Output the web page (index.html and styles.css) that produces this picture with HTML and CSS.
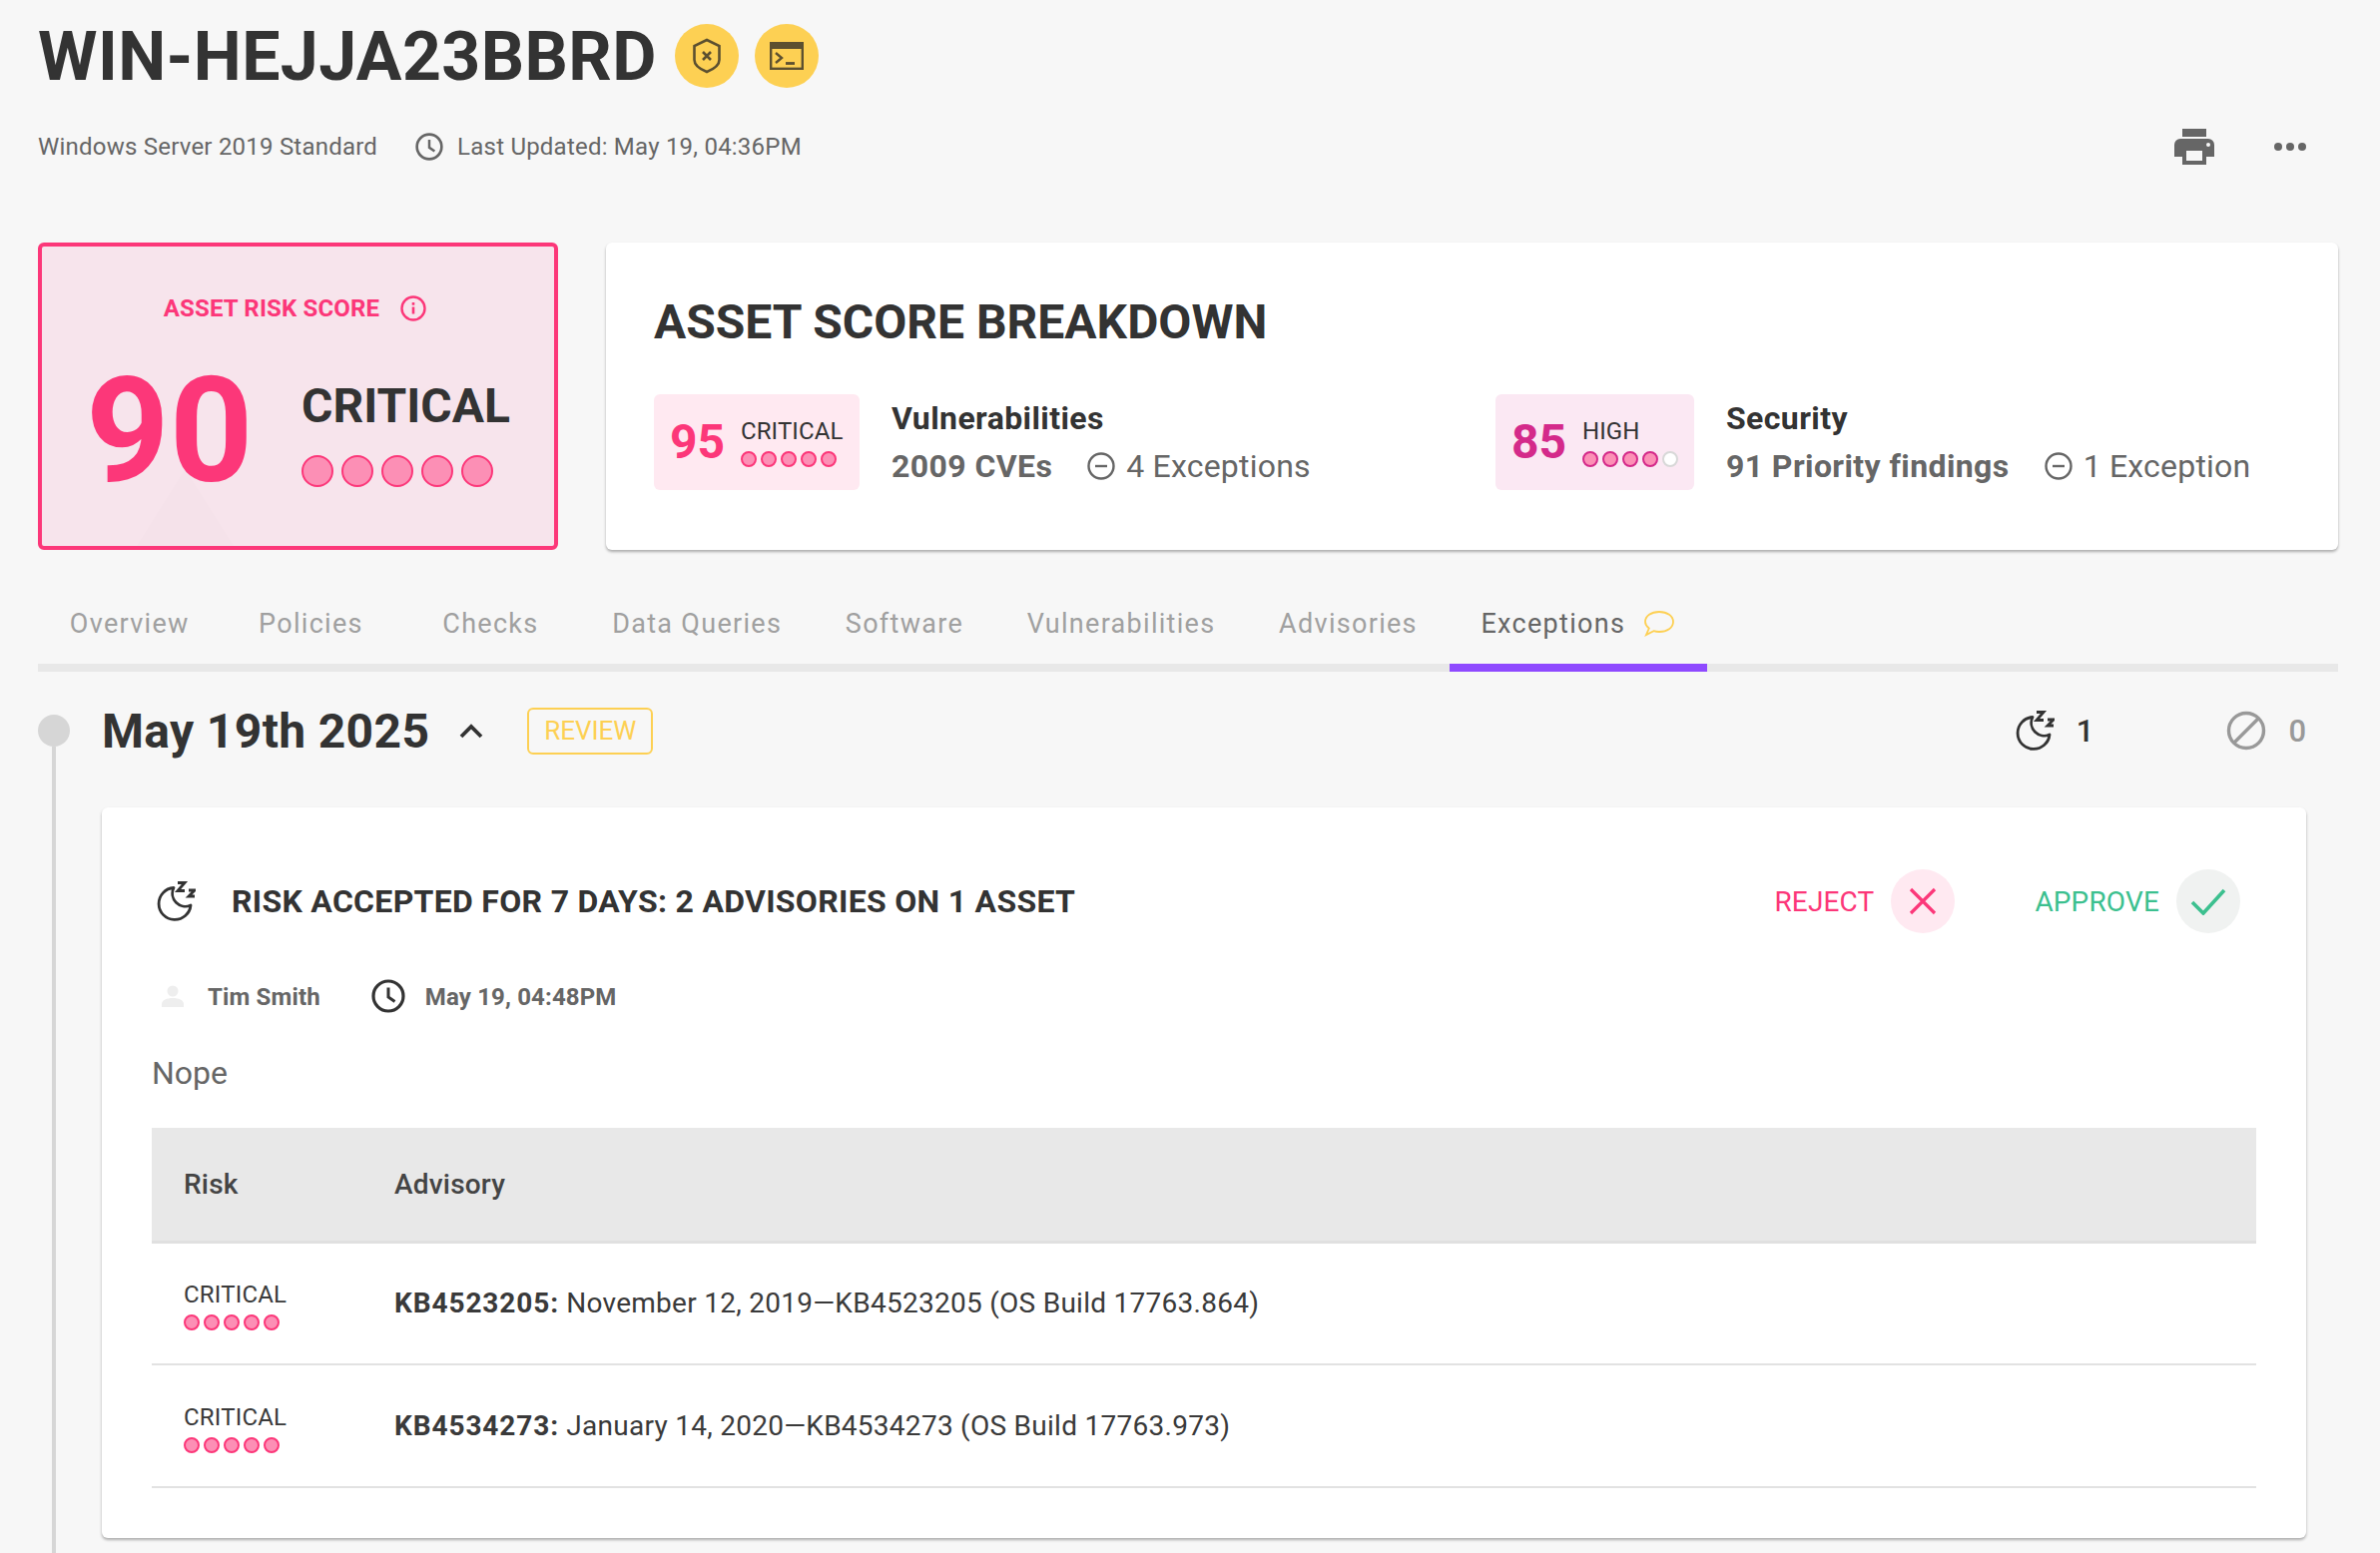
FILE: index.html
```html
<!DOCTYPE html>
<html lang="en">
<head>
<meta charset="utf-8">
<title>WIN-HEJJA23BBRD</title>
<link rel="stylesheet" href="styles.css">
</head>
<body>
<div class="page">
  <svg class="defs" width="0" height="0" aria-hidden="true">
    <defs>
      <symbol id="moon" viewBox="0 0 40 40">
        <path d="M18 6.500A16 16 0 1 0 35 24 A13 13 0 0 1 18 6.500Z" fill="none" stroke="currentColor" stroke-width="2.800" stroke-linejoin="round"/>
        <path d="M22 1.500h7l-7 8h7M33 9h6l-6 6h6" fill="none" stroke="currentColor" stroke-width="2.800"/>
      </symbol>
      <symbol id="clock" viewBox="0 0 34 34">
        <circle cx="17" cy="17" r="15" fill="none" stroke="currentColor" stroke-width="3.200"/>
        <path d="M17 8.500V18l6.500 4.500" fill="none" stroke="currentColor" stroke-width="3"/>
      </symbol>
      <symbol id="minus" viewBox="0 0 28 28">
        <circle cx="14" cy="14" r="12.500" fill="none" stroke="currentColor" stroke-width="2.400"/>
        <path d="M8 14h12" stroke="currentColor" stroke-width="2.400"/>
      </symbol>
    </defs>
  </svg>

  <header class="head">
    <div class="title-row">
      <h1 class="title">WIN-HEJJA23BBRD</h1>
      <span class="badge">
        <svg width="30" height="36" viewBox="0 0 30 36"><path d="M15 2l12.500 6v14c0 5-5 9-12.500 12C7.500 31 2.500 27 2.500 22V8z" fill="none" stroke="#5c5030" stroke-width="2.600"/><path d="M11 14l8 8M19 14l-8 8" stroke="#5c5030" stroke-width="2.600"/></svg>
      </span>
      <span class="badge">
        <svg width="34" height="28" viewBox="0 0 34 28"><rect x="1.200" y="1.200" width="31.600" height="25.600" fill="none" stroke="#5c5030" stroke-width="2.400"/><rect x="1" y="1" width="32" height="6" fill="#5c5030"/><path d="M6 11l6 5-6 5" fill="none" stroke="#5c5030" stroke-width="2.400"/><path d="M16 21.500h9" stroke="#5c5030" stroke-width="2.800"/></svg>
      </span>
    </div>
    <div class="sub-row">
      <span class="os">Windows Server 2019 Standard</span>
      <svg class="sub-clock" width="28" height="28"><use href="#clock"/></svg>
      <span class="updated">Last Updated: May 19, 04:36PM</span>
      <span class="tools">
        <svg width="40" height="36" viewBox="0 0 40 36"><path d="M8 0h24v8H8zM6 10h28a6 6 0 0 1 6 6v12h-8v8H8v-8H0V16a6 6 0 0 1 6-6z" fill="#666"/><rect x="12" y="22" width="16" height="10" fill="#f7f7f7"/><circle cx="34" cy="16" r="2" fill="#f7f7f7"/></svg>
        <svg class="more" width="32" height="8" viewBox="0 0 32 8"><circle cx="4" cy="4" r="4" fill="#666"/><circle cx="16" cy="4" r="4" fill="#666"/><circle cx="28" cy="4" r="4" fill="#666"/></svg>
      </span>
    </div>
  </header>

  <section class="scores">
    <div class="risk">
      <span class="beam"></span>
      <div class="risk-label">
        <span>ASSET RISK SCORE</span>
        <svg width="26" height="26" viewBox="0 0 26 26"><circle cx="13" cy="13" r="11.500" fill="none" stroke="#fc3779" stroke-width="2.400"/><path d="M13 11.500v7M13 7v2.800" stroke="#fc3779" stroke-width="2.600"/></svg>
      </div>
      <div class="risk-main">
        <span class="risk-num">90</span>
        <div class="risk-side">
          <span class="risk-word">CRITICAL</span>
          <span class="dots dots-lg"><i></i><i></i><i></i><i></i><i></i></span>
        </div>
      </div>
    </div>
    <div class="breakdown">
      <h2 class="bd-title">ASSET SCORE BREAKDOWN</h2>
      <div class="bd-row">
        <div class="bd-item bd-vuln">
          <div class="chip chip-crit">
            <span class="chip-num">95</span>
            <div class="chip-side"><span class="chip-word">CRITICAL</span><span class="dots"><i></i><i></i><i></i><i></i><i></i></span></div>
          </div>
          <div class="bd-text">
            <div class="bd-name">Vulnerabilities</div>
            <div class="bd-detail"><b>2009 CVEs</b><svg width="28" height="28"><use href="#minus"/></svg><span>4 Exceptions</span></div>
          </div>
        </div>
        <div class="bd-item bd-sec">
          <div class="chip chip-high">
            <span class="chip-num">85</span>
            <div class="chip-side"><span class="chip-word">HIGH</span><span class="dots dots-high"><i></i><i></i><i></i><i></i><i class="off"></i></span></div>
          </div>
          <div class="bd-text">
            <div class="bd-name">Security</div>
            <div class="bd-detail"><b>91 Priority findings</b><svg width="28" height="28"><use href="#minus"/></svg><span>1 Exception</span></div>
          </div>
        </div>
      </div>
    </div>
  </section>

  <nav class="tabs">
    <a class="tab">Overview</a>
    <a class="tab">Policies</a>
    <a class="tab">Checks</a>
    <a class="tab">Data Queries</a>
    <a class="tab">Software</a>
    <a class="tab">Vulnerabilities</a>
    <a class="tab">Advisories</a>
    <a class="tab active">Exceptions
      <svg width="32" height="28" viewBox="0 0 32 28"><path d="M16 2c8 0 14 4 14 10s-6 10-14 10c-2 0-4-.3-5.500-.8L3 25l2.800-6.500C3.500 16.700 2 14.500 2 12 2 6 8 2 16 2z" fill="none" stroke="#fdd053" stroke-width="1.800"/></svg>
    </a>
  </nav>

  <section class="group">
    <div class="rail"><span class="rail-dot"></span><span class="rail-line"></span></div>
    <div class="group-body">
      <div class="group-head">
        <h3 class="date">May 19th 2025</h3>
        <svg class="chev" width="24" height="16" viewBox="0 0 24 16"><path d="M2 14l10-10 10 10" fill="none" stroke="#333" stroke-width="3.800"/></svg>
        <span class="review">REVIEW</span>
        <span class="stat stat-moon"><svg width="40" height="40"><use href="#moon"/></svg>1</span>
        <span class="stat stat-ban">
          <svg width="40" height="40" viewBox="0 0 40 40"><circle cx="20" cy="20" r="17.500" fill="none" stroke="#999" stroke-width="3.400"/><path d="M8 32L32 8" stroke="#999" stroke-width="3.400"/></svg>0</span>
      </div>

      <article class="card">
        <div class="card-top">
          <svg class="card-moon" width="40" height="40"><use href="#moon"/></svg>
          <h4 class="card-title">RISK ACCEPTED FOR 7 DAYS: 2 ADVISORIES ON 1 ASSET</h4>
          <div class="actions">
            <span class="act act-reject">REJECT<span class="act-btn">
              <svg width="30" height="30" viewBox="0 0 30 30"><path d="M3 3l24 24M27 3L3 27" stroke="#fc3779" stroke-width="3.200"/></svg></span></span>
            <span class="act act-approve">APPROVE<span class="act-btn">
              <svg width="36" height="28" viewBox="0 0 36 28"><path d="M2 15l11 11L34 3" fill="none" stroke="#3cc08f" stroke-width="3.600"/></svg></span></span>
          </div>
        </div>
        <div class="meta">
          <svg class="avatar" width="22" height="22" viewBox="0 0 22 22"><circle cx="11" cy="6" r="5.500" fill="#eee"/><path d="M0 22v-3c0-4 5-6 11-6s11 2 11 6v3z" fill="#eee"/></svg>
          <span class="meta-name">Tim Smith</span>
          <svg class="meta-clock" width="34" height="34"><use href="#clock"/></svg>
          <span class="meta-date">May 19, 04:48PM</span>
        </div>
        <p class="note">Nope</p>
        <table class="table">
          <thead><tr><th class="col-risk">Risk</th><th>Advisory</th></tr></thead>
          <tbody>
            <tr>
              <td><div class="cell-risk"><span class="cell-word">CRITICAL</span><span class="dots"><i></i><i></i><i></i><i></i><i></i></span></div></td>
              <td><b>KB4523205:</b> November 12, 2019—KB4523205 (OS Build 17763.864)</td>
            </tr>
            <tr>
              <td><div class="cell-risk"><span class="cell-word">CRITICAL</span><span class="dots"><i></i><i></i><i></i><i></i><i></i></span></div></td>
              <td><b>KB4534273:</b> January 14, 2020—KB4534273 (OS Build 17763.973)</td>
            </tr>
          </tbody>
        </table>
      </article>
    </div>
  </section>
</div>
</body>
</html>
```
FILE: styles.css
```css
* { box-sizing: border-box; }
html, body { margin: 0; padding: 0; }
body { background: #f7f7f7; font-family: Roboto, "Liberation Sans", sans-serif; color: #333; }
.page { width: 2384px; height: 1556px; overflow: hidden; padding: 0 42px 0 38px; }
.defs { position: absolute; }

.head { padding-top: 24px; }
.title-row { display: flex; align-items: center; height: 64px; }
.title { margin: 2px 18px 0 0; font-size: 68px; line-height: 64px; font-weight: 700; letter-spacing: .4px; color: #333; }
.badge { width: 64px; height: 64px; border-radius: 50%; background: #fdd053; display: flex; align-items: center; justify-content: center; margin-right: 16px; }
.sub-row { display: flex; align-items: center; height: 48px; margin-top: 35px; color: #666; font-size: 24px; letter-spacing: .22px; }
.sub-clock { margin: 0 14px 0 38px; color: #666; }
.tools { margin-left: auto; display: flex; align-items: center; padding-right: 32px; }
.more { margin-left: 60px; }

.scores { display: flex; gap: 48px; margin-top: 72px; height: 308px; }
.risk { position: relative; width: 521px; border: 4px solid #fc3779; border-radius: 6px; background: #f7e4ec; overflow: hidden; }
.beam { position: absolute; left: 95px; bottom: 0; width: 97px; height: 77px; background: #f5e2ea; clip-path: polygon(50% 0, 100% 100%, 0 100%); }
.risk-label { position: relative; display: flex; align-items: center; justify-content: center; gap: 21px; margin-top: 49px; height: 26px; color: #fc3779; font-size: 24px; font-weight: 700; letter-spacing: .15px; padding-right: 6px; }
.risk-main { position: relative; display: flex; align-items: center; margin-top: 46px; padding-left: 44px; }
.risk-num { font-size: 146px; line-height: 130px; font-weight: 700; color: #fc3779; width: 216px; }
.risk-side { display: flex; flex-direction: column; gap: 26px; margin-top: 6px; }
.risk-word { font-size: 48px; line-height: 46px; font-weight: 700; color: #333; }

.dots { display: flex; gap: 4px; }
.dots i { width: 16px; height: 16px; border-radius: 50%; background: #fc8fb5; border: 2px solid #fc3779; }
.dots-lg { gap: 8px; }
.dots-lg i { width: 32px; height: 32px; border-width: 2.500px; }
.dots-high i { border-color: #d42a8a; }
.dots-high i.off { background: #fff; border-color: #d8d8d8; }

.breakdown { flex: 1; background: #fff; border-radius: 6px; box-shadow: 0 2px 3px rgba(0,0,0,.3); padding: 0 48px; }
.bd-title { margin: 51px 0 0; font-size: 48px; line-height: 58px; font-weight: 700; color: #333; }
.bd-row { display: flex; margin-top: 43px; }
.bd-item { display: flex; align-items: center; }
.bd-vuln { width: 843px; }
.chip { display: flex; align-items: center; height: 96px; border-radius: 6px; padding-left: 16px; }
.chip-crit { width: 206px; background: #ffe9f1; }
.chip-high { width: 199px; background: #fbe8f3; }
.chip-num { font-size: 48px; font-weight: 700; line-height: 50px; color: #fc3779; width: 71px; }
.chip-high .chip-num { color: #d42a8a; }
.chip-side { display: flex; flex-direction: column; gap: 6px; }
.chip-word { font-size: 24px; line-height: 28px; color: #333; letter-spacing: .1px; }
.bd-text { margin-left: 32px; }
.bd-name { font-size: 32px; line-height: 40px; font-weight: 700; color: #333; letter-spacing: .4px; }
.bd-detail { display: flex; align-items: center; margin-top: 8px; font-size: 32px; line-height: 40px; color: #666; white-space: nowrap; letter-spacing: .2px; }
.bd-detail b { font-weight: 700; letter-spacing: .4px; }
.bd-detail svg { margin: 0 11px 0 35px; }

.tabs { display: flex; margin-top: 32px; box-shadow: inset 0 -8px 0 #e8e8e8; }
.tab { display: flex; align-items: center; justify-content: center; min-width: 180px; height: 90px; padding: 2px 31.800px 0; border-bottom: 8px solid transparent; font-size: 27px; letter-spacing: 1.300px; color: #a0a0a0; white-space: nowrap; }
.tab.active { color: #666; border-bottom-color: #8f4aff; }
.tab svg { margin-left: 18px; }

.group { display: flex; height: 900px; }
.rail { width: 64px; flex: none; display: flex; flex-direction: column; padding-top: 43px; }
.rail-dot { width: 32px; height: 32px; border-radius: 50%; background: #d6d6d6; }
.rail-line { width: 4px; flex: 1; margin-left: 14px; background: #d6d6d6; }
.group-body { flex: 1; margin-right: 32px; }
.group-head { display: flex; align-items: center; height: 48px; margin-top: 35px; }
.date { margin: 2px 0 0; font-size: 48px; line-height: 48px; font-weight: 700; letter-spacing: .35px; color: #333; }
.chev { margin-left: 30px; }
.review { margin-left: 44px; width: 126px; height: 47px; border: 2.500px solid #fdd053; border-radius: 6px; color: #fdd053; font-size: 26px; font-weight: 400; display: flex; align-items: center; justify-content: center; }
.stat { display: flex; align-items: center; font-size: 31px; font-weight: 500; gap: 22px; }
.stat-moon { margin-left: auto; color: #333; }
.stat-ban { margin-left: 133px; color: #999; }

.card { margin-top: 53px; background: #fff; border-radius: 6px; box-shadow: 0 2px 3px rgba(0,0,0,.3); padding: 62px 50px 50px 50px; }
.card-top { display: flex; align-items: center; height: 64px; }
.card-moon { margin-left: 4px; color: #333; }
.card-title { margin: 0 0 0 36px; font-size: 32px; font-weight: 700; letter-spacing: .3px; color: #333; }
.actions { margin-left: auto; display: flex; gap: 80px; padding-right: 16px; }
.act { display: flex; align-items: center; gap: 17px; font-size: 28px; letter-spacing: .15px; }
.act-btn { width: 64px; height: 64px; border-radius: 50%; display: flex; align-items: center; justify-content: center; }
.act-reject { color: #fc3779; }
.act-reject .act-btn { background: #ffe9f1; }
.act-approve { color: #3cc08f; }
.act-approve .act-btn { background: #f0f2f1; }

.meta { display: flex; align-items: center; height: 34px; margin-top: 46px; font-size: 24px; font-weight: 700; color: #666; letter-spacing: .15px; }
.meta-name, .meta-date { padding-top: 2px; }
.avatar { margin-left: 10px; }
.meta-name { margin-left: 24px; }
.meta-clock { margin: 0 20px 0 51px; color: #333; }
.note { margin: 40px 0 35px; font-size: 32px; line-height: 40px; color: #666; }

.table { width: 100%; border-collapse: collapse; font-size: 28px; color: #3a3a3a; }
.table th { height: 114px; background: #e8e8e8; border-bottom: 3px solid #e0e0e0; text-align: left; font-weight: 500; color: #444; padding: 0; letter-spacing: .2px; }
.table th.col-risk { width: 243px; padding-left: 32px; }
.table td { height: 123px; border-bottom: 2px solid #e2e2e2; padding: 0; letter-spacing: .27px; }
.table td b { font-weight: 700; letter-spacing: .9px; }
.cell-risk { display: flex; flex-direction: column; gap: 6px; padding: 4px 0 0 32px; }
.cell-word { font-size: 24px; line-height: 28px; letter-spacing: .2px; }
```
